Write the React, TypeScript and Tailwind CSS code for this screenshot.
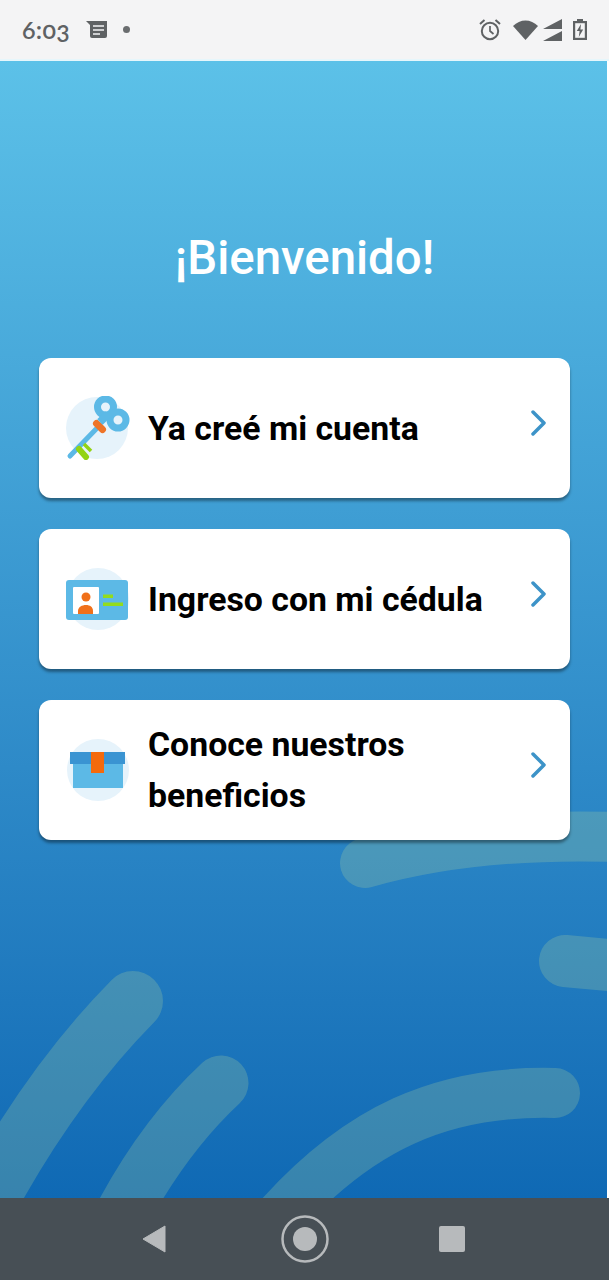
import React from "react";

const cards = [
  { id: "key", lines: ["Ya creé mi cuenta"] },
  { id: "id", lines: ["Ingreso con mi cédula"] },
  { id: "box", lines: ["Conoce nuestros", "beneficios"] },
];

function KeyIcon() {
  return (
    <svg viewBox="65 396 66 64" className="w-[66px] h-16 shrink-0">
      <circle cx="97" cy="428" r="31" fill="#e6f3fb" />
      <path d="M70 456 L100 425" stroke="#5cb9e6" strokeWidth="5" strokeLinecap="round" />
      <path d="M79 449 L86 457" stroke="#93d314" strokeWidth="6" strokeLinecap="round" />
      <path d="M84 444 L91 451" stroke="#93d314" strokeWidth="3.5" />
      <path d="M96.5 423.5 L102.5 429.5" stroke="#ee7428" strokeWidth="7" strokeLinecap="round" />
      <circle cx="105.5" cy="407" r="8" fill="none" stroke="#5cb9e6" strokeWidth="7" />
      <circle cx="118" cy="420" r="8" fill="none" stroke="#5cb9e6" strokeWidth="7" />
      <path d="M100 422 L108 414" stroke="#5cb9e6" strokeWidth="8" />
    </svg>
  );
}

function IdIcon() {
  return (
    <svg viewBox="65 568 66 64" className="w-[66px] h-16 shrink-0">
      <circle cx="98" cy="600" r="31" fill="#e6f3fb" />
      <rect x="66" y="581" width="62" height="40" rx="3" fill="#5cb9e6" />
      <rect x="73" y="588" width="26" height="27" rx="1" fill="#ffffff" />
      <circle cx="86" cy="598" r="4.5" fill="#f0701a" />
      <path d="M78 615 V612 C78 608 82 606 86 606 C90 606 93 608 93 612 V615 Z" fill="#f0701a" />
      <rect x="103" y="595.5" width="10" height="3.5" fill="#93dc1c" />
      <rect x="103" y="603.5" width="20" height="3.5" fill="#93dc1c" />
    </svg>
  );
}

function BoxIcon() {
  return (
    <svg viewBox="65 738 66 64" className="w-[66px] h-16 shrink-0">
      <circle cx="98" cy="770" r="31" fill="#e6f3fb" />
      <rect x="73" y="764" width="50" height="24" fill="#5cb9e6" />
      <rect x="70" y="752" width="55" height="12" fill="#3a94d2" />
      <rect x="91" y="752" width="13" height="21" fill="#f46a0c" />
    </svg>
  );
}

function StatusBar() {
  return (
    <div className="h-[61px] bg-[#f4f4f5] flex items-center pl-[22px] pr-[21px] text-[#5f6264] border-b-2 border-[#e6f6fb]">
      <span className="font-['Lato',sans-serif] text-[25px] font-semibold oldstyle-nums tracking-[0.3px]">6:03</span>
      <svg viewBox="0 0 22 18" className="w-[22px] h-[18px] ml-[16px]">
        <path d="M0 0 H21 V15 a2 2 0 0 1 -2 2 H6 a2 2 0 0 1 -2 -2 V4 Z" fill="#5f6264" />
        <path d="M7 5 H18 M7 9 H18 M7 13 H14" stroke="#f4f4f5" strokeWidth="1.6" />
      </svg>
      <span className="w-[7px] h-[7px] rounded-full bg-[#6a6d6f] ml-[15px]" />
      <div className="ml-auto flex items-center">
        <svg viewBox="0 0 24 24" className="w-[24px] h-[24px]">
          <circle cx="12" cy="13" r="8.2" fill="none" stroke="#5f6264" strokeWidth="2" />
          <path d="M12 8 V13 L15.5 16" fill="none" stroke="#5f6264" strokeWidth="1.7" />
          <path d="M2 6 L6.5 2 M22 6 L17.5 2" stroke="#5f6264" strokeWidth="2" />
        </svg>
        <svg viewBox="0 0 25 20" className="w-[25px] h-[20px] ml-[11px]">
          <path d="M0 6 C7 -1.5 18 -1.5 25 6 L12.5 20 Z" fill="#5f6264" />
        </svg>
        <svg viewBox="0 0 20 22" className="w-[20px] h-[22px] ml-[5px]">
          <path d="M0 10 L19 0 V10 Z M0 22 L19 12 V22 Z" fill="#5f6264" />
        </svg>
        <svg viewBox="0 0 14 21" className="w-[14px] h-[21px] ml-[11px] -translate-x-[1px]">
          <path d="M4 0 H10 V2 H14 V21 H0 V2 H4 Z" fill="#5f6264" />
          <rect x="2.2" y="4.2" width="9.6" height="14.6" fill="#f4f4f5" />
          <path d="M8 5 L3.8 12 H6.6 L5.8 18 L10.2 10.4 H7.4 Z" fill="#5f6264" />
        </svg>
      </div>
    </div>
  );
}

function Waves() {
  // page coordinates, the main area starts at y=61
  return (
    <svg viewBox="0 61 607 1137" className="absolute inset-0 w-full h-full pointer-events-none">
      <g fill="none" stroke="#b0d49c" strokeOpacity="0.25" strokeLinecap="round">
        <path d="M133 1001 Q50 1085 -17 1210" strokeWidth="60" />
        <path d="M221 1083 Q165 1135 122 1215" strokeWidth="55" />
        <path d="M555 1093 C440 1090 358 1130 281 1215" strokeWidth="50" />
        <path d="M365 863 Q480 830 640 838" strokeWidth="50" />
        <path d="M565 961 L640 968" strokeWidth="52" />
      </g>
    </svg>
  );
}

function NavBar() {
  return (
    <div className="h-[82px] bg-[#474f55] relative flex items-start pt-[17px] pl-[142px]">
      <svg viewBox="0 0 24 28" className="w-[24px] h-[28px] mt-[10px]">
        <path d="M23 1 V27 L1 14 Z" fill="#b7babc" stroke="#b7babc" strokeWidth="1" strokeLinejoin="round" />
      </svg>
      <svg viewBox="0 0 48 48" className="w-[48px] h-[48px] ml-[115px]">
        <circle cx="24" cy="24" r="22.5" fill="none" stroke="#b7babc" strokeWidth="2.5" />
        <circle cx="24" cy="24" r="12" fill="#b7babc" />
      </svg>
      <div className="w-[26px] h-[26px] rounded-[2px] bg-[#b7babc] ml-[110px] mt-[11px]" />
    </div>
  );
}

export default function App() {
  return (
    <div className="w-[609px] h-[1280px] flex flex-col bg-white overflow-hidden font-['Roboto',sans-serif]">
      <StatusBar />
      <main className="relative flex-1 w-[607px] bg-gradient-to-b from-[#5cc1e8] to-[#0f69b4] pr-[37px] pl-[39px]">
        <Waves />
        <h1 className="relative text-center text-white text-[47.4px] leading-[52px] font-medium mt-[171px] -mx-[39px]">
          ¡Bienvenido!
        </h1>
        <div className="relative flex flex-col gap-[31px] mt-[74px]">
          {cards.map((card) => (
            <div
              key={card.id}
              className="h-[140px] bg-white rounded-[12px] shadow-[0_3px_3px_rgba(0,0,0,0.38)] flex items-center pl-[26px] pr-[24px]"
            >
              {card.id === "key" && <KeyIcon />}
              {card.id === "id" && <IdIcon />}
              {card.id === "box" && <BoxIcon />}
              <div className="flex-1 ml-[17px] text-[33.8px] leading-[51px] font-bold text-black">
                {card.lines.map((line) => (
                  <div key={line}>{line}</div>
                ))}
              </div>
              <svg viewBox="0 0 15 26" className="w-[15px] h-[26px] shrink-0 -mt-[10px]">
                <path d="M2 2 L13 13 L2 24" fill="none" stroke="#3d93c8" strokeWidth="3.5" strokeLinecap="round" strokeLinejoin="round" />
              </svg>
            </div>
          ))}
        </div>
      </main>
      <NavBar />
    </div>
  );
}
